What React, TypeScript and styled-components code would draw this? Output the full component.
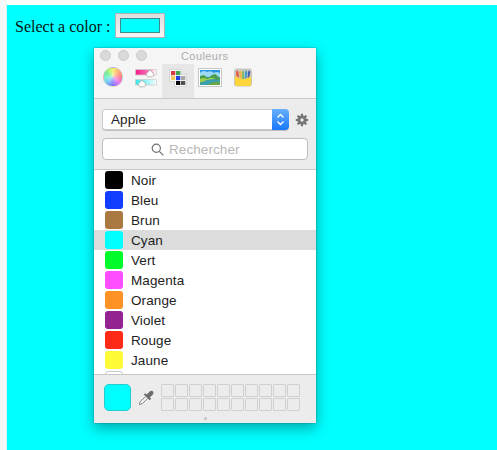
import React from "react";
import styled, { createGlobalStyle } from "styled-components";

const GlobalStyle = createGlobalStyle`
  * { box-sizing: border-box; }
  html, body { margin: 0; padding: 0; height: 100%; overflow: hidden; background: #f7f7f7; }
  svg { display: block; flex: none; }
`;

const Frame = styled.div`
  display: flex;
  height: 450px;
  padding-left: 6px;
  background: #f7f7f7;
`;

const Page = styled.main`
  flex: 1;
  background: #00ffff;
  border-top: 5px solid #fdfffd;
  border-left: 1px solid #c8fbfc;
`;

const Field = styled.div`
  display: flex;
  height: 43px;
  padding: 8px 0 0 8px;
`;

const Label = styled.label`
  width: 100px;
  padding-top: 4px;
  font: 16px/20px "Liberation Serif", "Times New Roman", serif;
  color: #061414;
  white-space: nowrap;
`;

const ColorButton = styled.button`
  width: 50px;
  height: 25px;
  padding: 4px;
  border: 1px solid #a9b4b4;
  background: linear-gradient(#dedede, #f5f5f5);
`;

const ColorValue = styled.span`
  display: block;
  height: 15px;
  border: 1px solid #42898b;
  background: #00ffff;
`;

const Picker = styled.section`
  display: flex;
  flex-direction: column;
  width: 222px;
  height: 375px;
  margin-left: 87px;
  background: #ececec;
  font-family: "Liberation Sans", Arial, sans-serif;
  color: #222;
  box-shadow: 0 0 1px rgba(0, 50, 50, 0.75), 0 5px 13px rgba(0, 40, 50, 0.42);
`;

const Header = styled.header`
  height: 51px;
  background: #f5f5f5;
  border-bottom: 1px solid #c8c8c8;
`;

const TitleBar = styled.div`
  display: flex;
  gap: 7px;
  height: 16px;
  padding: 2px 0 0 6px;
`;

const WindowDot = styled.span`
  width: 11px;
  height: 11px;
  border-radius: 50%;
  border: 1px solid #c9c9c9;
  background: #dadada;
`;

const Title = styled.span`
  margin-left: 27px;
  font-size: 11px;
  line-height: 13px;
  letter-spacing: 0.42px;
  color: #acacac;
`;

const Tabs = styled.nav`
  display: flex;
  height: 34px;
  padding-left: 3px;
`;

const Tab = styled.button<{ $active?: boolean }>`
  display: flex;
  justify-content: center;
  width: ${(p) => (p.$active ? 32 : 32.5)}px;
  padding: 3px 0 0;
  border: 0;
  background: ${(p) => (p.$active ? "#e6e6e6" : "transparent")};
`;

const Wheel = styled.span`
  width: 20px;
  height: 20px;
  border-radius: 50%;
  border: 1px solid rgba(210, 210, 210, 0.5);
  background: radial-gradient(circle, rgba(255, 255, 255, 0.6), rgba(255, 255, 255, 0.12) 70%),
    conic-gradient(#f6e94f, #ff9d54 45deg, #ff5d78 90deg, #df59ed 135deg, #6656ff 180deg, #54b4fa 225deg, #55eccb 265deg, #52e87d 300deg, #aaf551 335deg, #f6e94f);
`;

const Filters = styled.div`
  display: flex;
  flex-direction: column;
  gap: 8px;
  height: 71px;
  padding: 10px 8px 0;
  border-bottom: 1px solid #cacaca;
`;

const SelectLine = styled.div`
  display: flex;
  gap: 6px;
  align-items: center;
  height: 21px;
`;

const Select = styled.button`
  display: flex;
  justify-content: space-between;
  flex: none;
  width: 187px;
  height: 21px;
  padding: 0;
  border: 0;
  border-radius: 4px;
  overflow: hidden;
  background: #fff;
  box-shadow: inset 0 0 0 1px #c9c9c9, 0 1px 0 #c0c0c0;
  font: 13.5px/21px "Liberation Sans", Arial, sans-serif;
  letter-spacing: 0.1px;
  color: #222;
`;

const SelectValue = styled.span`
  padding-left: 9px;
`;

const Stepper = styled.span`
  display: flex;
  align-items: center;
  justify-content: center;
  width: 17px;
  height: 21px;
  background: linear-gradient(#68b0fb, #1877fa);
`;

const Search = styled.div`
  display: flex;
  align-items: center;
  gap: 5px;
  height: 22px;
  padding-left: 48px;
  border: 1px solid #bdbdbd;
  border-radius: 4px;
  background: #fff;
  font-size: 13.5px;
  letter-spacing: 0.08px;
  color: #b7b7b7;
`;

const Colors = styled.ul`
  height: 204px;
  margin: 0;
  padding: 0;
  overflow: hidden;
  list-style: none;
  background: #fff;
`;

const ColorRow = styled.li<{ $active: boolean }>`
  display: flex;
  align-items: center;
  gap: 8px;
  height: 20px;
  padding-left: 11px;
  background: ${(p) => (p.$active ? "#dcdcdc" : "#fff")};
`;

const ColorName = styled.span`
  padding-top: 1px;
  font-size: 13.5px;
  line-height: 19px;
  letter-spacing: 0.1px;
`;

const Swatch = styled.span<{ $color: string }>`
  width: 18px;
  height: 18px;
  border-radius: 3px;
  border: ${(p) => (p.$color === "#ffffff" ? "1px solid #ccc" : "0")};
  background: ${(p) => p.$color};
`;

const Footer = styled.footer`
  flex: 1;
  display: grid;
  grid-template-columns: 27px 16px 139px;
  grid-template-rows: 27px 12px;
  column-gap: 7px;
  padding: 9px 0 0 10px;
  border-top: 1px solid #c6c6c6;
`;

const Current = styled.span`
  border: 1px solid #22cdd0;
  border-radius: 5px;
  background: #00ffff;
`;

const Dropper = styled.span`
  display: flex;
  align-items: center;
`;

const Saved = styled.div`
  display: grid;
  grid-template-columns: repeat(10, 13px);
  grid-auto-rows: 13px;
  gap: 1px;
`;

const SavedCell = styled.span`
  border: 1px solid #d0d0d0;
  border-radius: 1px;
`;

const Grip = styled.span`
  grid-column: 1 / -1;
  width: 3px;
  height: 3px;
  margin: 6px 0 0 100px;
  border-radius: 50%;
  background: #c3c3c3;
`;

const colors: { name?: string; color: string }[] = [
  { name: "Noir", color: "#000000" },
  { name: "Bleu", color: "#103dff" },
  { name: "Brun", color: "#aa7942" },
  { name: "Cyan", color: "#00ffff" },
  { name: "Vert", color: "#00fb2b" },
  { name: "Magenta", color: "#ff4eff" },
  { name: "Orange", color: "#ff9224" },
  { name: "Violet", color: "#922390" },
  { name: "Rouge", color: "#ff2917" },
  { name: "Jaune", color: "#fffa36" },
  { color: "#ffffff" },
];

function SlidersIcon() {
  return (
    <svg width="22" height="21" viewBox="0 0 22 21">
      <defs>
        <linearGradient id="pink"><stop stopColor="#f51b8b" /><stop offset=".55" stopColor="#f66caf" /><stop offset="1" stopColor="#fff" /></linearGradient>
        <linearGradient id="aqua"><stop stopColor="#37e4e8" /><stop offset="1" stopColor="#f2ffff" /></linearGradient>
      </defs>
      <path d="M.5 2.5h21v5.5H.5z" fill="url(#pink)" stroke="#ccc" strokeWidth=".7" />
      <path d="M.5 12.5h21v5.5H.5z" fill="url(#aqua)" stroke="#ccc" strokeWidth=".7" />
      <path d="M15 3l3.3 3.5q.6 3.3-1 3.3h-4.6q-1.6 0-1-3.3z" fill="#fff" stroke="#aaa" strokeWidth=".8" />
      <path d="M7 13l3.3 3.5q.6 3.3-1 3.3H4.7q-1.6 0-1-3.3z" fill="#fff" stroke="#aaa" strokeWidth=".8" />
    </svg>
  );
}

function PaletteIcon() {
  return (
    <svg width="18" height="20" viewBox="0 0 18 20">
      <path d="M.5 2.5h11.5v5h5v12H5.5v-5h-5z" fill="#fff" stroke="#c9c9c9" strokeWidth=".7" />
      <path d="M2 4h4.3v4.2H2z" fill="#d83a42" />
      <path d="M7 4h4.3v4.2H7z" fill="#43a44d" />
      <path d="M2 9h4.3v4.2H2z" fill="#f6c75c" />
      <path d="M7 9h4.3v4.2H7z" fill="#2340e3" />
      <path d="M12 9h4.2v4.2H12z" fill="#a7a7a7" />
      <path d="M7 14h4.3v4H7z" fill="#080808" />
      <path d="M12 14h4.2v4H12z" fill="#505050" />
    </svg>
  );
}

function PictureIcon() {
  return (
    <svg width="24" height="21" viewBox="0 0 24 21">
      <path d="M.5 1.5h23v18H.5z" fill="#fff" stroke="#c7c7c7" />
      <path d="M2 3h20v15H2z" fill="#2993df" />
      <path d="M3 5q3-2 6 0 4-2 7 1 2-2 6 0v4H2V6z" fill="#9cdaf4" />
      <path d="M2 9l4-1 4 3 4-3 3-1 5 4v7H2z" fill="#4c9c4d" />
      <path d="M2 12q4-2 7 0 4-2 8-1l-4 3-8 2-3-1z" fill="#9dce4d" />
      <path d="M2 16l7-3 6-1 7 1v2l-8 1-5 2H2z" fill="#3b9fad" />
      <path d="M13 16q5-2 9-1v3H10z" fill="#67a747" />
    </svg>
  );
}

function PencilsIcon() {
  return (
    <svg width="18" height="20" viewBox="0 0 18 20">
      <rect x=".5" y="2" width="17" height="17" rx="2" fill="#c9c9c4" stroke="#c9c6ba" />
      <path d="M1 9l4 2 4 1 4-1 4-2v9H1z" fill="#fdd43e" />
      <path d="M2 5l1-2 1.5 2 .7 6-3-2z" fill="#e45d45" />
      <path d="M5.2 5l1-2 1.5 2 .3 7-2-1z" fill="#eeb64b" />
      <path d="M8.3 5l.8-2 .9 2v7H8.3z" fill="#77b85a" />
      <path d="M11 5l1-2 1.3 2-.8 6-1.8 1z" fill="#3f9cc4" />
      <path d="M14 5l1-2 1.3 2-1 5-1.8 1z" fill="#4659af" />
      <path d="M1 12h16v5a2 2 0 0 1-2 2H3a2 2 0 0 1-2-2z" fill="#fed53a" />
    </svg>
  );
}

function GearIcon() {
  return (
    <svg width="14" height="14" viewBox="-7 -7 14 14" fill="#747474">
      {[0, 45, 90, 135].map((angle) => (
        <path key={angle} d="M-1-6.2h2l.4 3v6.4l-.4 3h-2l-.4-3v-6.4z" transform={`rotate(${angle})`} />
      ))}
      <circle r="4" />
      <circle r="1.7" fill="#ececec" />
    </svg>
  );
}

function DropperIcon() {
  return (
    <svg width="16" height="16" viewBox="0 0 16 16">
      <path d="M7.7 6.6L2.2 11.5l-.9 3 3-.8L9.6 8.5" fill="#f3f3f3" stroke="#858585" />
      <path d="M5.8 4.6l1.5-1.3 1.6 1.2 2.5-2.8q2-1.7 3.4-.4t-.1 3.4l-2.8 2.5 1.2 1.6-1.5 1.4z" fill="#6c6c6c" />
    </svg>
  );
}

export default function App() {
  return (
    <>
      <GlobalStyle />
      <Frame>
        <Page>
          <Field>
            <Label htmlFor="color">Select a color :</Label>
            <ColorButton id="color"><ColorValue /></ColorButton>
          </Field>
          <Picker>
            <Header>
              <TitleBar>
                <WindowDot /><WindowDot /><WindowDot />
                <Title>Couleurs</Title>
              </TitleBar>
              <Tabs>
                <Tab><Wheel /></Tab>
                <Tab><SlidersIcon /></Tab>
                <Tab $active><PaletteIcon /></Tab>
                <Tab><PictureIcon /></Tab>
                <Tab><PencilsIcon /></Tab>
              </Tabs>
            </Header>
            <Filters>
              <SelectLine>
                <Select>
                  <SelectValue>Apple</SelectValue>
                  <Stepper>
                    <svg width="9" height="13" viewBox="0 0 9 13" fill="none" stroke="#fff" strokeWidth="1.4">
                      <path d="M1.5 4.5l3-3 3 3M1.5 8.5l3 3 3-3" />
                    </svg>
                  </Stepper>
                </Select>
                <GearIcon />
              </SelectLine>
              <Search>
                <svg width="13" height="13" viewBox="0 0 13 13" fill="none" stroke="#707070" strokeWidth="1.2">
                  <circle cx="5.3" cy="5.3" r="4.1" />
                  <path d="M8.3 8.3l4 4" />
                </svg>
                Rechercher
              </Search>
            </Filters>
            <Colors>
              {colors.map(({ name, color }) => (
                <ColorRow key={color} $active={name === "Cyan"}>
                  <Swatch $color={color} />
                  {name && <ColorName>{name}</ColorName>}
                </ColorRow>
              ))}
            </Colors>
            <Footer>
              <Current />
              <Dropper><DropperIcon /></Dropper>
              <Saved>
                {Array.from({ length: 20 }, (_, i) => <SavedCell key={i} />)}
              </Saved>
              <Grip />
            </Footer>
          </Picker>
        </Page>
      </Frame>
    </>
  );
}
